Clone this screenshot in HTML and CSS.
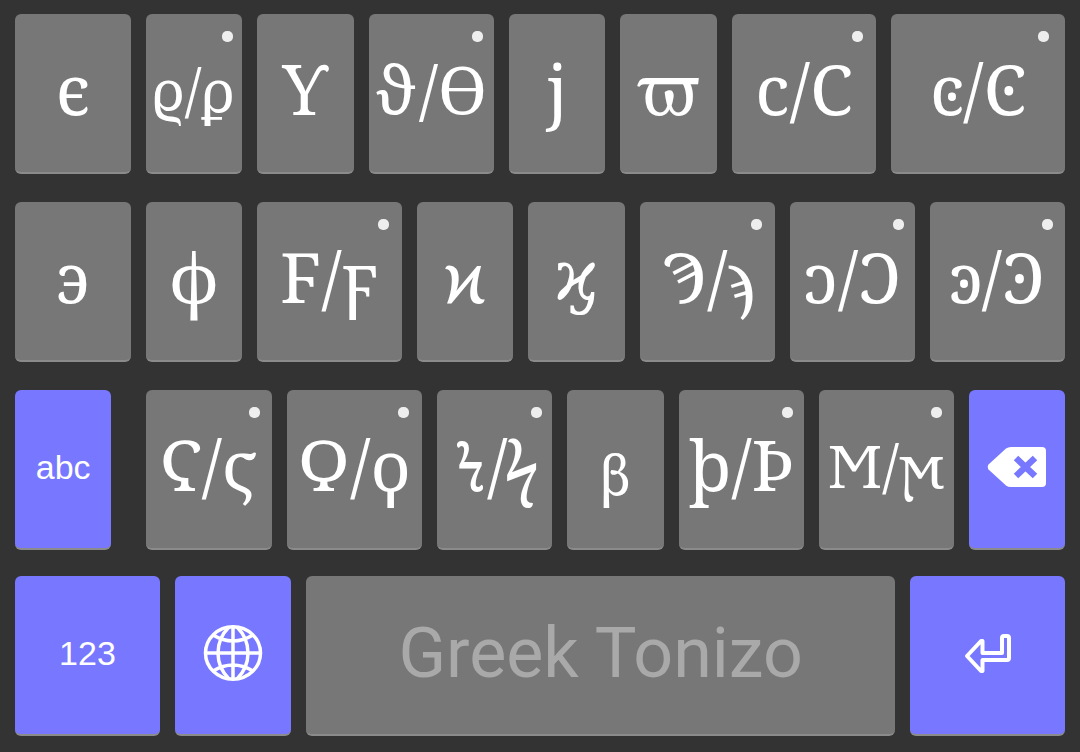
FILE: index.html
```html
<!DOCTYPE html>
<html lang="el">
<head>
    <meta charset="UTF-8">
    <meta name="viewport" content="width=device-width, initial-scale=1.0">
    <title>Greek Tonizo</title>
    <link rel="stylesheet" href="styles.css">
</head>
<body>
    <main class="keyboard">
        <div class="letters">
            <div class="row">
                <button type="button" class="key u12">ϵ</button>
                <button type="button" class="key u10 more small">ϱ/ϼ</button>
                <button type="button" class="key u10">ϒ</button>
                <button type="button" class="key u13 more medium">ϑ/ϴ</button>
                <button type="button" class="key u10">ϳ</button>
                <button type="button" class="key u10">ϖ</button>
                <button type="button" class="key u15 more">ϲ/Ϲ</button>
                <button type="button" class="key u18 more">ͼ/Ͼ</button>
            </div>
            <div class="row">
                <button type="button" class="key u12">϶</button>
                <button type="button" class="key u10">ϕ</button>
                <button type="button" class="key u15 more">Ϝ/ϝ</button>
                <button type="button" class="key u10">ϰ</button>
                <button type="button" class="key u10 kai">ϗ</button>
                <button type="button" class="key u14 more">Ϡ/ϡ</button>
                <button type="button" class="key u13 more">ͻ/Ͻ</button>
                <button type="button" class="key u14 more">ͽ/Ͽ</button>
            </div>
            <div class="row">
                <button type="button" class="key u10 action shift">abc</button>
                <button type="button" class="key u13 more">Ϛ/ϛ</button>
                <button type="button" class="key u14 more">Ϙ/ϙ</button>
                <button type="button" class="key u12 more">Ϟ/ϟ</button>
                <button type="button" class="key u10 beta">β</button>
                <button type="button" class="key u13 more">ϸ/Ϸ</button>
                <button type="button" class="key u14 more small">Ϻ/ϻ</button>
                <button type="button" class="key u10 action" aria-label="Backspace">
                    <svg width="60" height="42" viewBox="0 0 60 42">
                        <path fill="#fff" d="M1.500 18.500 19 2.500Q21 1 24 1H55Q59 1 59 5V37Q59 41 55 41H24Q21 41 19 39.500L1.500 23.500Q0 21 1.500 18.500Z"/>
                        <path stroke="#77f" stroke-width="6.500" d="M29 12 48 30M48 12 29 30"/>
                    </svg>
                </button>
            </div>
        </div>
        <div class="row">
            <button type="button" class="key u15 action">123</button>
            <button type="button" class="key u12 action" aria-label="Next language">
                <svg width="60" height="58" viewBox="0 0 60 58" fill="none" stroke="#fff" stroke-width="3.500">
                    <ellipse cx="30" cy="29" rx="27.500" ry="26.300"/>
                    <path d="M30 3V55M2 29H58M10 11Q30 23 50 11M10 47Q30 35 50 47"/>
                    <path d="M26 3Q15 14 15 29T26 55M34 3Q45 14 45 29T34 55"/>
                </svg>
            </button>
            <button type="button" class="key u61 space">Greek Tonizo</button>
            <button type="button" class="key u16 action" aria-label="Enter">
                <svg width="48" height="40" viewBox="0 0 48 40" fill="none" stroke="#fff" stroke-width="4" stroke-linejoin="round">
                    <path d="M3 23 17 8H18.500V20H38V5Q38 3 40 3H43Q45 3 45 5V25Q45 27 43 27H18.500V38H17Z"/>
                </svg>
            </button>
        </div>
    </main>
</body>
</html>
```

FILE: styles.css
```css
* { margin: 0; padding: 0; box-sizing: border-box; }
body { background: #333; }
.keyboard {
    min-height: 100vh; padding: 14px 15px 16px;
    display: flex; flex-direction: column; gap: 26px;
}
.letters { display: flex; flex-direction: column; gap: 28px; }
.row { display: flex; gap: 15px; }

.key {
    position: relative; min-width: 0; height: 160px; padding-bottom: 10px;
    display: flex; align-items: center; justify-content: center;
    background: #777; color: white; border: none; border-bottom: 2px solid #8b8b8b;
    border-radius: 6px; cursor: pointer; white-space: nowrap;
    font: 70px "Noto Serif", "DejaVu Serif", serif;
}
.key:active { background: #8b8b8b; }
.medium { font-size: 66px; }
.small { font-size: 58px; padding-bottom: 8px; }
.beta { font-size: 54px; padding: 10px 0 0; }
.kai { font-family: "DejaVu Serif", serif; }

/* key widths, in keyboard units */
.u10 { flex: 10 1 0; }
.u12 { flex: 12 1 0; }
.u13 { flex: 13 1 0; }
.u14 { flex: 14 1 0; }
.u15 { flex: 15 1 0; }
.u16 { flex: 16 1 0; }
.u18 { flex: 18 1 0; }
.u61 { flex: 61 1 0; }

/* dot for keys with long-press alternatives */
.more::after {
    content: ""; position: absolute; top: 17px; right: 9%;
    width: 11px; height: 11px; border-radius: 5px; background: #eee;
}

.action {
    background: #77f; padding-bottom: 4px;
    font: 34px "Liberation Sans", Arial, sans-serif;
}
.shift { margin-right: 20px; }
.space { color: #a9a9a9; padding-bottom: 4px; font: 70px Roboto, sans-serif; }
```
